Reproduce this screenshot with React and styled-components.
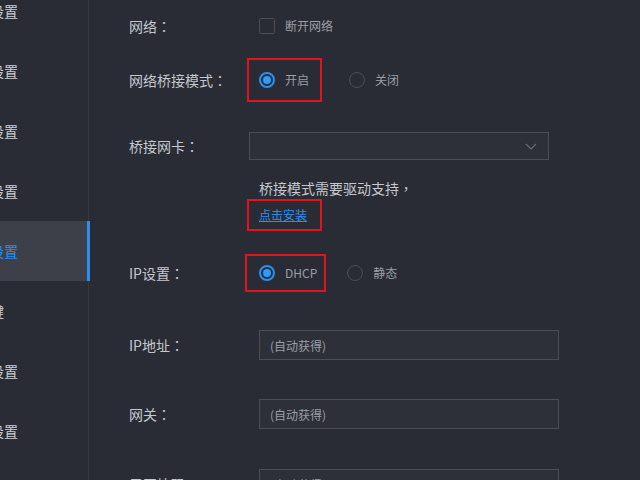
import React from "react";
import styled, { createGlobalStyle, css } from "styled-components";

const GlobalStyle = createGlobalStyle`
  html, body {
    margin: 0;
    padding: 0;
    background: #292c34;
  }
  body {
    font-family: "Noto Sans CJK SC", "Noto Sans", sans-serif;
  }
  * { box-sizing: border-box; }
`;

const menu = ["基本设置", "音频设置", "视频设置", "录制设置", "网络设置", "快捷键", "高级设置", "其他设置"];

// label text with a centred full-width colon, like the reference
const FieldLabel = ({ w, children }) => (
  <Label $w={w}>
    {children}
    {children && <Colon>：</Colon>}
  </Label>
);

export default function App() {
  return (
    <>
      <GlobalStyle />
      <Page>
        <Sidebar>
          {menu.map((item, i) => (
            <MenuItem key={item} $active={i === 4}>{item}</MenuItem>
          ))}
        </Sidebar>
        <Main>
          <Row $h={36}>
            <FieldLabel>网络</FieldLabel>
            <Option>
              <Checkbox />
              <OptionText>断开网络</OptionText>
            </Option>
          </Row>

          <Row $h={72}>
            <FieldLabel>网络桥接模式</FieldLabel>
            <Highlight $l={12} $r={13} $v={14}>
              <Option>
                <Radio $checked />
                <OptionText>开启</OptionText>
              </Option>
            </Highlight>
            <Option $gap={40}>
              <Radio />
              <OptionText>关闭</OptionText>
            </Option>
          </Row>

          <Row $h={60}>
            <FieldLabel w={120}>桥接网卡</FieldLabel>
            <Select>
              <svg width="12" height="7" viewBox="0 0 12 7">
                <path d="M1 1 L6 6 L11 1" fill="none" stroke="#666a73" strokeWidth="1.2" />
              </svg>
            </Select>
          </Row>

          <Row $h={24}>
            <Label />
            <Hint>桥接模式需要驱动支持<Colon>，</Colon></Hint>
          </Row>

          <Row $h={30}>
            <Label />
            <Highlight $l={12} $r={15} $v={8}>
              <Link href="#">点击安装</Link>
            </Highlight>
          </Row>

          <Row $h={86}>
            <FieldLabel>IP设置</FieldLabel>
            <Highlight $l={14} $r={9} $v={11}>
              <Option>
                <Radio $checked />
                <OptionText>DHCP</OptionText>
              </Option>
            </Highlight>
            <Option $gap={30}>
              <Radio />
              <OptionText>静态</OptionText>
            </Option>
          </Row>

          <Row $h={58}>
            <FieldLabel>IP地址</FieldLabel>
            <Input>(自动获得)</Input>
          </Row>

          <Row $h={80}>
            <FieldLabel>网关</FieldLabel>
            <Input>(自动获得)</Input>
          </Row>

          <Row $h={60}>
            <FieldLabel>子网掩码</FieldLabel>
            <Input>(自动获得)</Input>
          </Row>
        </Main>
      </Page>
    </>
  );
}

const Page = styled.div`
  display: flex;
  width: 640px;
  height: 480px;
  overflow: hidden;
  background: #292c34;
`;

const Sidebar = styled.nav`
  flex: 0 0 127px;
  margin-left: -38px;
  margin-top: -19px;
  display: flex;
  flex-direction: column;
  border-right: 1px solid #363941;
`;

const MenuItem = styled.div`
  position: relative;
  height: 60px;
  flex: 0 0 60px;
  display: flex;
  align-items: center;
  font-size: 14px;
  color: #c8ccd3;
  white-space: nowrap;

  ${(p) =>
    p.$active &&
    css`
      background: #3d4049;
      color: #2b8ff0;
      &::after {
        content: "";
        position: absolute;
        top: 0;
        bottom: 0;
        right: -2px;
        width: 3px;
        background: #2b8ff0;
      }
    `}
`;

const Main = styled.main`
  flex: 1;
  padding: 8px 0 0 40px;
  display: flex;
  flex-direction: column;
`;

const Row = styled.div`
  display: flex;
  align-items: center;
  height: ${(p) => p.$h}px;
  flex: 0 0 ${(p) => p.$h}px;
`;

const Label = styled.div`
  flex: 0 0 ${(p) => p.$w || 130}px;
  font-size: 14px;
  color: #c5c8cf;
  white-space: nowrap;
`;

const Colon = styled.span`
  font-family: "Noto Sans CJK TC", "Noto Sans CJK SC", sans-serif;
`;

const Option = styled.label`
  display: inline-flex;
  align-items: center;
  gap: 10px;
  margin-left: ${(p) => p.$gap || 0}px;
`;

const OptionText = styled.span`
  font-size: 12px;
  color: #9a9ea7;
  line-height: 16px;
`;

const Checkbox = styled.span`
  width: 16px;
  height: 16px;
  border: 1px solid #4a4d56;
  border-radius: 2px;
`;

const Radio = styled.span`
  position: relative;
  width: 16px;
  height: 16px;
  border-radius: 50%;
  border: 1px solid ${(p) => (p.$checked ? "#2b8ff0" : "#4a4d56")};

  ${(p) =>
    p.$checked &&
    css`
      border-width: 2px;
      &::after {
        content: "";
        position: absolute;
        inset: 2px;
        border-radius: 50%;
        background: #2b9bff;
      }
    `}
`;

const Highlight = styled.span`
  display: inline-flex;
  align-items: center;
  border: 2px solid #e0151b;
  padding: ${(p) => p.$v - 2}px ${(p) => p.$r - 2}px ${(p) => p.$v - 2}px ${(p) => p.$l - 2}px;
  margin: -${(p) => p.$v}px -${(p) => p.$r}px -${(p) => p.$v}px -${(p) => p.$l}px;
`;

const Select = styled.div`
  width: 300px;
  height: 28px;
  border: 1px solid #4a4d57;
  background: #2d3038;
  display: flex;
  align-items: center;
  justify-content: flex-end;
  padding-right: 11px;
`;

const Hint = styled.div`
  font-size: 14px;
  color: #c5c8cf;
  white-space: nowrap;
`;

const Link = styled.a`
  font-size: 12px;
  color: #2b8ff0;
  text-decoration: underline;
  line-height: 16px;
`;

const Input = styled.div`
  width: 300px;
  height: 30px;
  border: 1px solid #4a4d57;
  background: #2d3038;
  display: flex;
  align-items: center;
  padding-left: 10px;
  font-size: 12px;
  color: #9a9ea7;
`;
